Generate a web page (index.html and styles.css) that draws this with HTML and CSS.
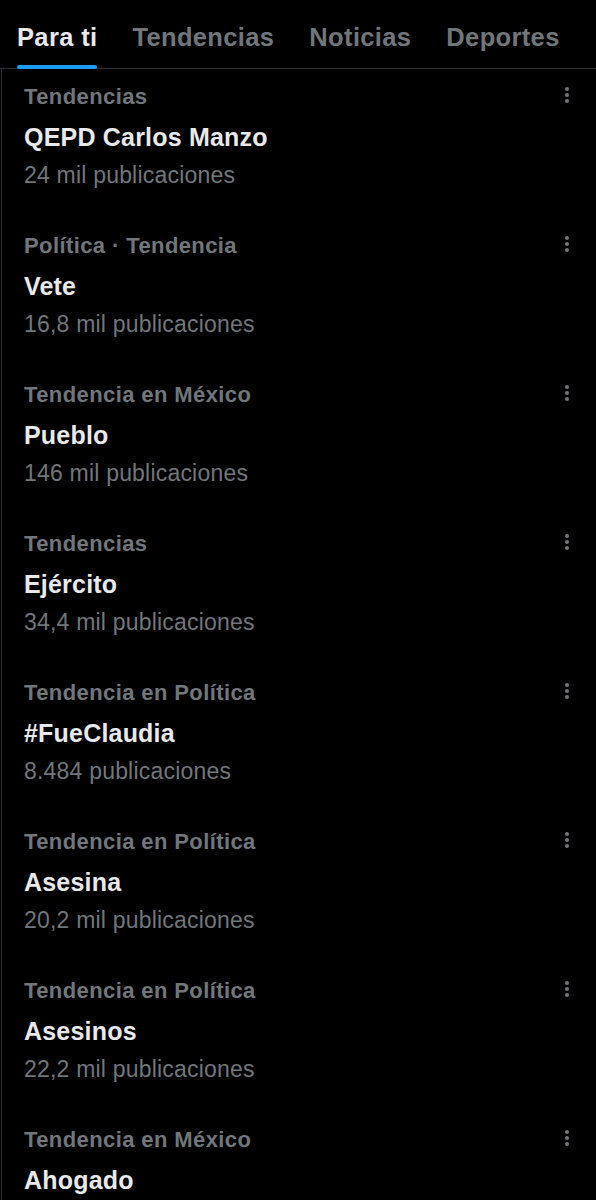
FILE: index.html
```html
<!DOCTYPE html>
<html lang="es">
<head>
  <meta charset="UTF-8">
  <meta name="viewport" content="width=device-width, initial-scale=1.0">
  <title>Explorar</title>
  <link rel="stylesheet" href="styles.css">
</head>
<body>
  <nav class="tabs">
    <a class="tab active" href="#">Para ti</a>
    <a class="tab" href="#">Tendencias</a>
    <a class="tab" href="#">Noticias</a>
    <a class="tab" href="#">Deportes</a>
  </nav>

  <div class="list">
    <div class="trend">
      <div class="info">
        <div class="category">Tendencias</div>
        <div class="title">QEPD Carlos Manzo</div>
        <div class="count">24 mil publicaciones</div>
      </div>
      <button class="more" aria-label="Más"><span></span><span></span><span></span></button>
    </div>
    <div class="trend">
      <div class="info">
        <div class="category">Política · Tendencia</div>
        <div class="title">Vete</div>
        <div class="count">16,8 mil publicaciones</div>
      </div>
      <button class="more" aria-label="Más"><span></span><span></span><span></span></button>
    </div>
    <div class="trend">
      <div class="info">
        <div class="category">Tendencia en México</div>
        <div class="title">Pueblo</div>
        <div class="count">146 mil publicaciones</div>
      </div>
      <button class="more" aria-label="Más"><span></span><span></span><span></span></button>
    </div>
    <div class="trend">
      <div class="info">
        <div class="category">Tendencias</div>
        <div class="title">Ejército</div>
        <div class="count">34,4 mil publicaciones</div>
      </div>
      <button class="more" aria-label="Más"><span></span><span></span><span></span></button>
    </div>
    <div class="trend">
      <div class="info">
        <div class="category">Tendencia en Política</div>
        <div class="title">#FueClaudia</div>
        <div class="count">8.484 publicaciones</div>
      </div>
      <button class="more" aria-label="Más"><span></span><span></span><span></span></button>
    </div>
    <div class="trend">
      <div class="info">
        <div class="category">Tendencia en Política</div>
        <div class="title">Asesina</div>
        <div class="count">20,2 mil publicaciones</div>
      </div>
      <button class="more" aria-label="Más"><span></span><span></span><span></span></button>
    </div>
    <div class="trend">
      <div class="info">
        <div class="category">Tendencia en Política</div>
        <div class="title">Asesinos</div>
        <div class="count">22,2 mil publicaciones</div>
      </div>
      <button class="more" aria-label="Más"><span></span><span></span><span></span></button>
    </div>
    <div class="trend">
      <div class="info">
        <div class="category">Tendencia en México</div>
        <div class="title">Ahogado</div>
      </div>
      <button class="more" aria-label="Más"><span></span><span></span><span></span></button>
    </div>
  </div>
</body>
</html>
```

FILE: styles.css
```css
body {
  margin: 0;
  background: #000;
  font-family: 'Liberation Sans', Arial, sans-serif;
  color: #e7e9ea;
  overflow: hidden;
}
.tabs {
  display: flex;
  gap: 35px;
  height: 69px;
  padding-left: 17px;
  border-bottom: 1px solid #2f3336;
  box-sizing: border-box;
}
.tab {
  position: relative;
  display: block;
  padding-top: 22px;
  font-size: 25.5px;
  font-weight: bold;
  line-height: 30px;
  letter-spacing: 0.35px;
  color: #71767b;
  text-decoration: none;
  white-space: nowrap;
}
.tab.active {
  color: #e7e9ea;
}
.tab.active::after {
  content: '';
  position: absolute;
  left: 0;
  right: 0;
  bottom: -1px;
  height: 4px;
  border-radius: 2px;
  background: #1d9bf0;
}
.list {
  margin-left: 1px;
  border-left: 1px solid #2f3336;
  min-height: 1200px;
}
.trend {
  display: flex;
  justify-content: space-between;
  padding: 13px 0 28px 22px;
}
.category {
  font-size: 22px;
  font-weight: bold;
  line-height: 30px;
  letter-spacing: 0.4px;
  color: #71767b;
}
.title {
  margin-top: 10px;
  font-size: 25px;
  font-weight: bold;
  line-height: 30px;
  letter-spacing: 0.2px;
  color: #e7e9ea;
}
.count {
  margin-top: 8px;
  font-size: 23px;
  line-height: 30px;
  letter-spacing: 0.2px;
  color: #71767b;
}
.more {
  display: flex;
  flex-direction: column;
  gap: 2px;
  align-self: flex-start;
  margin: 5px 27px 0 0;
  padding: 0;
  background: none;
  border: none;
}
.more span {
  width: 4px;
  height: 4px;
  border-radius: 50%;
  background: #71767b;
}
```
